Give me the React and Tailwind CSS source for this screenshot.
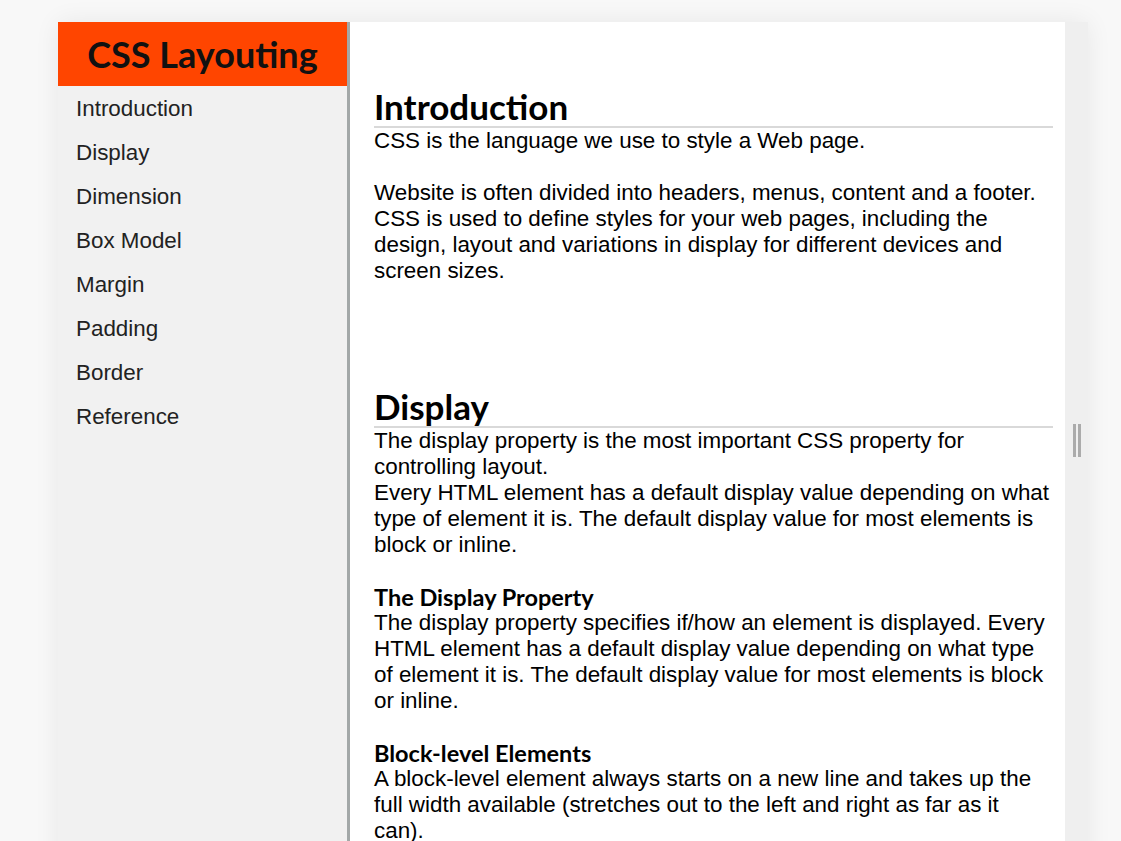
import React from 'react';

const navItems = [
  'Introduction',
  'Display',
  'Dimension',
  'Box Model',
  'Margin',
  'Padding',
  'Border',
  'Reference',
];

const headingFont = "font-['Lato','DejaVu_Sans',sans-serif]";

const Heading = ({ children }) => (
  <h2
    className={`${headingFont} text-[35px] font-bold leading-[40px] text-black border-b-2 border-[#d9d9d9]`}
  >
    {children}
  </h2>
);

const SubHeading = ({ children }) => (
  <h3 className={`${headingFont} text-[23.5px] font-bold leading-[26px] text-black`}>
    {children}
  </h3>
);

export default function App() {
  return (
    <div className="h-[841px] overflow-hidden bg-[#f8f8f8] pt-[22px] pl-[58px] font-['Liberation_Sans',Arial,Helvetica,sans-serif]">
      <div className="flex w-[1030px] min-h-[900px] shadow-[0_0_24px_rgba(0,0,0,0.07)]">
        {/* Sidebar */}
        <aside className="w-[292px] shrink-0 bg-[#f1f1f1] border-r-[3px] border-[#a3a8a8]">
          <div className="h-[64px] bg-[#ff4500] flex items-center justify-center">
            <h1 className={`${headingFont} text-[36px] font-bold text-[#111] leading-none`}>
              CSS Layouting
            </h1>
          </div>
          <nav>
            {navItems.map((item) => (
              <a
                key={item}
                href={`#${item.toLowerCase().replace(' ', '-')}`}
                className="block h-[44px] pl-[18px] text-[22.4px] leading-[45px] text-[#222]"
              >
                {item}
              </a>
            ))}
          </nav>
        </aside>

        {/* Content */}
        <main className="w-[715px] shrink-0 bg-white pl-[24px] pr-[12px] pt-[64px] text-[22.4px] leading-[1.16] text-black">
          <section>
            <Heading>Introduction</Heading>
            <p>
              CSS is the language we use to style a Web page.
              <br />
              <br />
              Website is often divided into headers, menus, content and a footer. CSS is used to
              define styles for your web pages, including the design, layout and variations in
              display for different devices and screen sizes.
            </p>
          </section>

          <section className="mt-[102px]">
            <Heading>Display</Heading>
            <div>
              The display property is the most important CSS property for controlling layout.
              <br />
              Every HTML element has a default display value depending on what type of element it
              is. The default display value for most elements is block or inline.
              <br />
              <br />
              <SubHeading>The Display Property</SubHeading>
              The display property specifies if/how an element is displayed. Every HTML element has
              a default display value depending on what type of element it is. The default display
              value for most elements is block or inline.
              <br />
              <br />
              <SubHeading>Block-level Elements</SubHeading>
              A block-level element always starts on a new line and takes up the full width
              available (stretches out to the left and right as far as it can).
            </div>
          </section>
        </main>

        {/* Splitter */}
        <div className="w-[23px] shrink-0 bg-[#efefef] pt-[402px] flex justify-center">
          <div className="flex gap-[2px] h-[33px]">
            <span className="w-[3px] bg-[#ababab]" />
            <span className="w-[3px] bg-[#ababab]" />
          </div>
        </div>
      </div>
    </div>
  );
}
